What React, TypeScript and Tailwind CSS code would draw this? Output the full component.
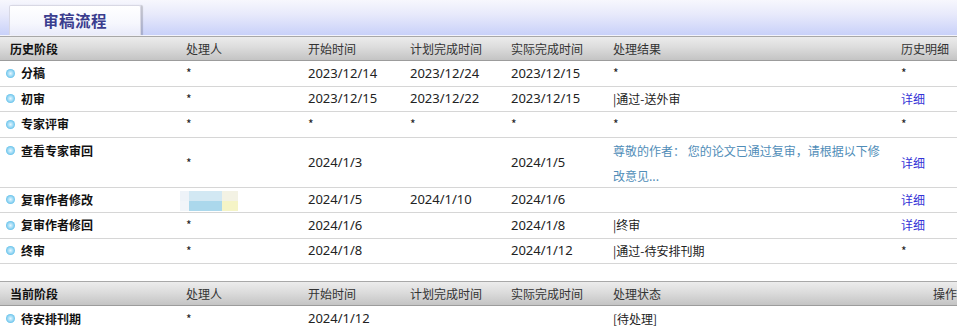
import React from "react";

const font = { fontFamily: '"Noto Sans CJK SC", "Noto Sans", sans-serif' };

type Row = {
  stage: string;
  handler: React.ReactNode;
  start: string;
  plan: string;
  actual: string;
  result: React.ReactNode;
  detail: React.ReactNode;
  tall?: boolean;
};

const Bullet = () => (
  <span
    className="inline-block w-[9px] h-[9px] rounded-full shrink-0"
    style={{
      background:
        "radial-gradient(circle at 50% 50%, #e6f7ff 0%, #9ad8f4 45%, #5cbde8 75%, #bfe6f7 100%)",
    }}
  />
);

const Link = () => <span className="text-[#3333d6]">详细</span>;

const Mosaic = () => (
  <div className="grid grid-cols-[9px_33px_16px] grid-rows-[10px_10px] w-[58px] h-[20px] mt-[2px] -ml-[6px]">
    <div className="bg-[#eef3f8]" />
    <div className="bg-[#d2e8f3]" />
    <div className="bg-[#f3f2e4]" />
    <div className="bg-[#f1f5f9]" />
    <div className="bg-[#abd8ec]" />
    <div className="bg-[#f5f4c6]" />
  </div>
);

const rows: Row[] = [
  { stage: "分稿", handler: "*", start: "2023/12/14", plan: "2023/12/24", actual: "2023/12/15", result: "*", detail: "*" },
  { stage: "初审", handler: "*", start: "2023/12/15", plan: "2023/12/22", actual: "2023/12/15", result: "|通过-送外审", detail: <Link /> },
  { stage: "专家评审", handler: "*", start: "*", plan: "*", actual: "*", result: "*", detail: "*" },
  {
    stage: "查看专家审回",
    handler: "*",
    start: "2024/1/3",
    plan: "",
    actual: "2024/1/5",
    result: (
      <span className="text-[#4f8db8] leading-[25px] block pr-[2px]">
        尊敬的作者： 您的论文已通过复审，请根据以下修改意见...
      </span>
    ),
    detail: <Link />,
    tall: true,
  },
  { stage: "复审作者修改", handler: <Mosaic />, start: "2024/1/5", plan: "2024/1/10", actual: "2024/1/6", result: "", detail: <Link /> },
  { stage: "复审作者修回", handler: "*", start: "2024/1/6", plan: "", actual: "2024/1/8", result: "|终审", detail: <Link /> },
  { stage: "终审", handler: "*", start: "2024/1/8", plan: "", actual: "2024/1/12", result: "|通过-待安排刊期", detail: "*" },
];

const cols = "grid grid-cols-[178px_122px_102px_101px_102px_288px_1fr]";
const dateFont = { fontFamily: '"Noto Sans", "Noto Sans CJK SC", sans-serif' };

const DateCell = ({ v }: { v: string }) =>
  v === "*" ? (
    <div className="pl-[8px]">*</div>
  ) : (
    <div className="pl-[8px] text-[13px] whitespace-nowrap" style={dateFont}>
      {v}
    </div>
  );

const Header = ({ labels, lastPad }: { labels: string[]; lastPad: string }) => (
  <div
    className={`${cols} h-[25px] items-center text-[12px] text-[#333] border-t border-t-[#a8a8a8] border-b border-b-[#9c9c9c]`}
    style={{ background: "linear-gradient(to bottom, #ececec 0%, #dcdcdc 45%, #c4c4c4 100%)" }}
  >
    {labels.map((l, i) => (
      <div
        key={i}
        className={
          i === 0
            ? "pl-[10px] font-bold text-[#111]"
            : i === 6
            ? `${lastPad} whitespace-nowrap overflow-hidden`
            : "pl-[8px] whitespace-nowrap"
        }
      >
        {l}
      </div>
    ))}
  </div>
);

export default function App() {
  return (
    <div className="w-[957px] h-[328px] overflow-hidden bg-white text-[#222]" style={font}>
      {/* Tab bar */}
      <div
        className="h-[36px] flex items-end pl-[9px] border-b border-b-[#f4f4fb]"
        style={{ background: "linear-gradient(to bottom, #f7f7fd 0%, #e8eafb 40%, #c9d1f9 100%)" }}
      >
        <div
          className="w-[132px] h-[30px] flex items-center justify-center border-t border-l border-r border-[#d8d8e4] shadow-[2px_0_1px_rgba(0,0,0,0.18)] rounded-t-[2px]"
          style={{ background: "linear-gradient(to bottom, #ffffff 0%, #f6f7fd 60%, #e9ebfa 100%)" }}
        >
          <span className="text-[15.5px] font-bold text-[#3a3d8e] tracking-[0.5px]">审稿流程</span>
        </div>
      </div>

      <Header
        labels={["历史阶段", "处理人", "开始时间", "计划完成时间", "实际完成时间", "处理结果", "历史明细"]}
        lastPad="pl-[8px]"
      />

      {rows.map((r, i) => (
        <div
          key={i}
          className={`${cols} ${r.tall ? "h-[50px]" : "h-[25.5px]"} items-center text-[12px] border-b border-b-[#d6d6d6]`}
        >
          <div className={`flex items-center gap-[6px] pl-[6px] font-bold text-[#111] ${r.tall ? "self-start h-[26px]" : ""}`}>
            <Bullet />
            <span>{r.stage}</span>
          </div>
          <div className="pl-[8px]">{r.handler}</div>
          <DateCell v={r.start} />
          <DateCell v={r.plan} />
          <DateCell v={r.actual} />
          <div className="pl-[8px]">{r.result}</div>
          <div className="pl-[8px]">{r.detail}</div>
        </div>
      ))}

      <div className="h-[17px]" />

      <Header
        labels={["当前阶段", "处理人", "开始时间", "计划完成时间", "实际完成时间", "处理状态", "操作"]}
        lastPad="pl-[40px]"
      />

      <div className={`${cols} h-[25px] items-center text-[12px]`}>
        <div className="flex items-center gap-[6px] pl-[6px] font-bold text-[#111]">
          <Bullet />
          <span>待安排刊期</span>
        </div>
        <div className="pl-[8px]">*</div>
        <DateCell v="2024/1/12" />
        <div className="pl-[8px]"></div>
        <div className="pl-[8px]"></div>
        <div className="pl-[8px]">[待处理]</div>
        <div className="pl-[8px]"></div>
      </div>
    </div>
  );
}
